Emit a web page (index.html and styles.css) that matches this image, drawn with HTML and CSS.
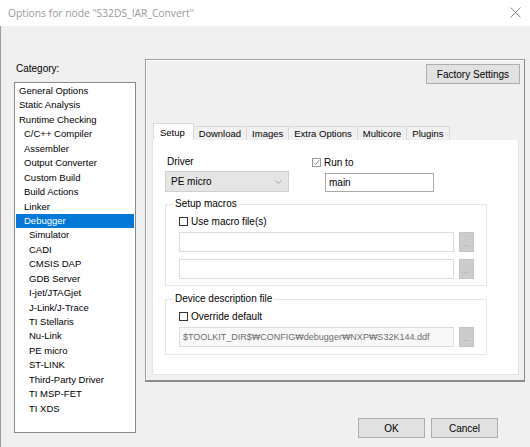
FILE: index.html
```html
<!DOCTYPE html>
<html lang="en">
<head>
    <meta charset="UTF-8">
    <title>Options for node "S32DS_IAR_Convert"</title>
    <link rel="stylesheet" href="styles.css">
</head>
<body>
    <div class="titlebar">
        <span class="title">Options for node "S32DS_IAR_Convert"</span>
        <svg class="close" width="11" height="11" viewBox="0 0 11 11">
            <path d="M0.5 0.5 L10.5 10.5 M10.5 0.5 L0.5 10.5" stroke="#8a8a8a" stroke-width="1" fill="none"/>
        </svg>
    </div>
    <div class="dialog">
        <div class="left">
            <div class="cat-label">Category:</div>
            <ul class="listbox">
                <li>General Options</li>
                <li>Static Analysis</li>
                <li>Runtime Checking</li>
                <li class="l1">C/C++ Compiler</li>
                <li class="l1">Assembler</li>
                <li class="l1">Output Converter</li>
                <li class="l1">Custom Build</li>
                <li class="l1">Build Actions</li>
                <li class="l1">Linker</li>
                <li class="l1 selected">Debugger</li>
                <li class="l2">Simulator</li>
                <li class="l2">CADI</li>
                <li class="l2">CMSIS DAP</li>
                <li class="l2">GDB Server</li>
                <li class="l2">I-jet/JTAGjet</li>
                <li class="l2">J-Link/J-Trace</li>
                <li class="l2">TI Stellaris</li>
                <li class="l2">Nu-Link</li>
                <li class="l2">PE micro</li>
                <li class="l2">ST-LINK</li>
                <li class="l2">Third-Party Driver</li>
                <li class="l2">TI MSP-FET</li>
                <li class="l2">TI XDS</li>
            </ul>
        </div>
        <div class="right">
            <div class="panel">
                <div class="factory-row">
                    <button class="btn factory">Factory Settings</button>
                </div>
                <div class="tabs">
                    <div class="tab active">Setup</div>
                    <div class="tab">Download</div>
                    <div class="tab">Images</div>
                    <div class="tab">Extra Options</div>
                    <div class="tab">Multicore</div>
                    <div class="tab">Plugins</div>
                </div>
                <div class="tab-body">
                    <div class="top-row">
                        <div class="driver">
                            <div class="lbl">Driver</div>
                            <div class="select">
                                <span>PE micro</span>
                                <svg width="7" height="4" viewBox="0 0 7 4"><path d="M0.5 0.5 L3.5 3.5 L6.5 0.5" stroke="#a8a8a8" fill="none"/></svg>
                            </div>
                        </div>
                        <div class="runto">
                            <div class="check-line">
                                <span class="box checked">
                                    <svg width="7" height="7" viewBox="0 0 7 7"><path d="M0.8 3.6 L2.7 5.5 L6.2 1.2" stroke="#8c8c8c" stroke-width="1" fill="none"/></svg>
                                </span>
                                Run to
                            </div>
                            <div class="input main-input">main</div>
                        </div>
                    </div>

                    <fieldset class="group macros">
                        <legend>Setup macros</legend>
                        <div class="check-line"><span class="box"></span>Use macro file(s)</div>
                        <div class="file-row">
                            <div class="input file"></div>
                            <div class="browse">...</div>
                        </div>
                        <div class="file-row">
                            <div class="input file"></div>
                            <div class="browse">...</div>
                        </div>
                    </fieldset>

                    <fieldset class="group device">
                        <legend>Device description file</legend>
                        <div class="check-line"><span class="box"></span>Override default</div>
                        <div class="file-row">
                            <div class="input file path">$TOOLKIT_DIR$₩CONFIG₩debugger₩NXP₩S32K144.ddf</div>
                            <div class="browse">...</div>
                        </div>
                    </fieldset>
                </div>
            </div>
            <div class="buttons">
                <button class="btn">OK</button>
                <button class="btn">Cancel</button>
            </div>
        </div>
    </div>
</body>
</html>
```

FILE: styles.css
```css
* { margin: 0; padding: 0; box-sizing: border-box; }
body {
    width: 530px;
    height: 447px;
    overflow: hidden;
    background-color: #f0f0f0;
    font-family: 'Liberation Sans', Arial, sans-serif;
    font-size: 10px;
    color: #000;
}
.titlebar {
    height: 26px;
    background-color: #fff;
    display: flex;
    align-items: center;
    justify-content: space-between;
    padding: 0 9px 0 8px;
}
.title {
    font-family: 'Open Sans', sans-serif;
    font-size: 10.3px;
    color: #9a9a9a;
}
.close { margin-top: -1px; }
.dialog {
    display: flex;
    height: 421px;
    border-left: 1px solid #9a9a9a;
    padding-left: 13px;
}
.left {
    width: 122px;
    padding-top: 36px;
}
.cat-label {
    height: 13px;
    line-height: 13px;
    padding-left: 2px;
    margin-bottom: 7px;
}
.listbox {
    list-style: none;
    background-color: #fff;
    border: 1px solid #8a8a8a;
    height: 351px;
    padding: 1px 1px 0 1px;
    font-size: 9.5px;
}
.listbox li {
    height: 14.45px;
    line-height: 14.45px;
    padding-left: 3px;
    white-space: nowrap;
}
.listbox li.l1 { padding-left: 8px; }
.listbox li.l2 { padding-left: 13px; }
.listbox li.selected {
    background-color: #0078d7;
    color: #fff;
}
.right {
    width: 380px;
    margin-left: 9px;
    padding-top: 33px;
}
.panel {
    height: 323px;
    border: 1px solid #a0a0a0;
    border-right-color: #8a8a8a;
    border-bottom: 2px solid #8a8a8a;
    box-shadow: inset 1px 1px 0 #fff;
    padding: 4px 5px 0 6px;
    display: flex;
    flex-direction: column;
}
.factory-row {
    display: flex;
    justify-content: flex-end;
    margin-right: -1px;
}
.btn {
    font-family: 'Liberation Sans', Arial, sans-serif;
    font-size: 10px;
    color: #000;
    background-color: #e1e1e1;
    border: 1px solid #adadad;
    height: 20px;
}
.factory { width: 94px; }
.tabs {
    display: flex;
    align-items: flex-end;
    margin-top: 38px;
    height: 18px;
    padding-left: 1px;
    font-size: 9.5px;
}
.tab {
    height: 14px;
    line-height: 13px;
    padding: 0 5px;
    border: 1px solid #d9d9d9;
    border-bottom: none;
    border-left: none;
    background-color: #f0f0f0;
}
.tab.active {
    height: 17px;
    line-height: 17px;
    background-color: #fff;
    border: 1px solid #d9d9d9;
    border-bottom: none;
    padding: 0 8px 0 6px;
}
.tab-body {
    flex: 1;
    background-color: #fff;
    border: 1px solid #e3e3e3;
    border-top: none;
    margin-bottom: 5px;
    padding: 16px 0 0 12px;
}
.top-row {
    display: flex;
}
.driver { width: 147px; }
.lbl {
    padding-left: 2px;
    height: 12px;
    line-height: 12px;
    margin-bottom: 3px;
}
.select {
    width: 124px;
    height: 21px;
    background-color: #e5e5e5;
    border: 1px solid #cfcfcf;
    display: flex;
    align-items: center;
    justify-content: space-between;
    padding: 0 6px 0 5px;
}
.check-line {
    display: flex;
    align-items: center;
    height: 12px;
    gap: 3px;
}
.box {
    width: 9px;
    height: 9px;
    border: 1px solid #333;
    background-color: #fff;
    display: flex;
    align-items: center;
    justify-content: center;
}
.box.checked { border-color: #9a9a9a; }
.runto .main-input {
    margin-top: 5px;
    margin-left: 13px;
    width: 109px;
}
.input {
    height: 19px;
    line-height: 17px;
    border: 1px solid #a9a9a9;
    background-color: #fff;
    padding-left: 3px;
    white-space: nowrap;
}
.group {
    width: 322px;
    border: 1px solid #e6e6e6;
    padding: 4px 0 5px 13px;
}
.group legend {
    padding: 0 1px;
    margin-left: -5px;
    line-height: 12px;
}
.macros {
    margin-top: 6px;
    height: 88px;
}
.device {
    margin-top: 7px;
    height: 62px;
}
.group .check-line { margin-top: 1px; }
.file-row {
    display: flex;
    align-items: center;
    gap: 5px;
    margin-top: 5px;
}
.file-row + .file-row { margin-top: 7px; }
.input.file {
    width: 275px;
    height: 20px;
    border-color: #dcdcdc;
}
.input.path {
    font-family: 'Liberation Sans', 'DejaVu Sans', sans-serif;
    font-size: 9px;
    color: #6d6d6d;
    background-color: #f8f8f8;
    line-height: 18px;
}
.browse {
    width: 15px;
    height: 20px;
    background-color: #cccccc;
    border: 1px solid #c4c4c4;
    color: #9a9a9a;
    font-size: 7px;
    text-align: center;
    line-height: 22px;
}
.buttons {
    display: flex;
    justify-content: flex-end;
    gap: 6px;
    margin-top: 36px;
    padding-right: 27px;
}
.buttons .btn { width: 67px; }
```
